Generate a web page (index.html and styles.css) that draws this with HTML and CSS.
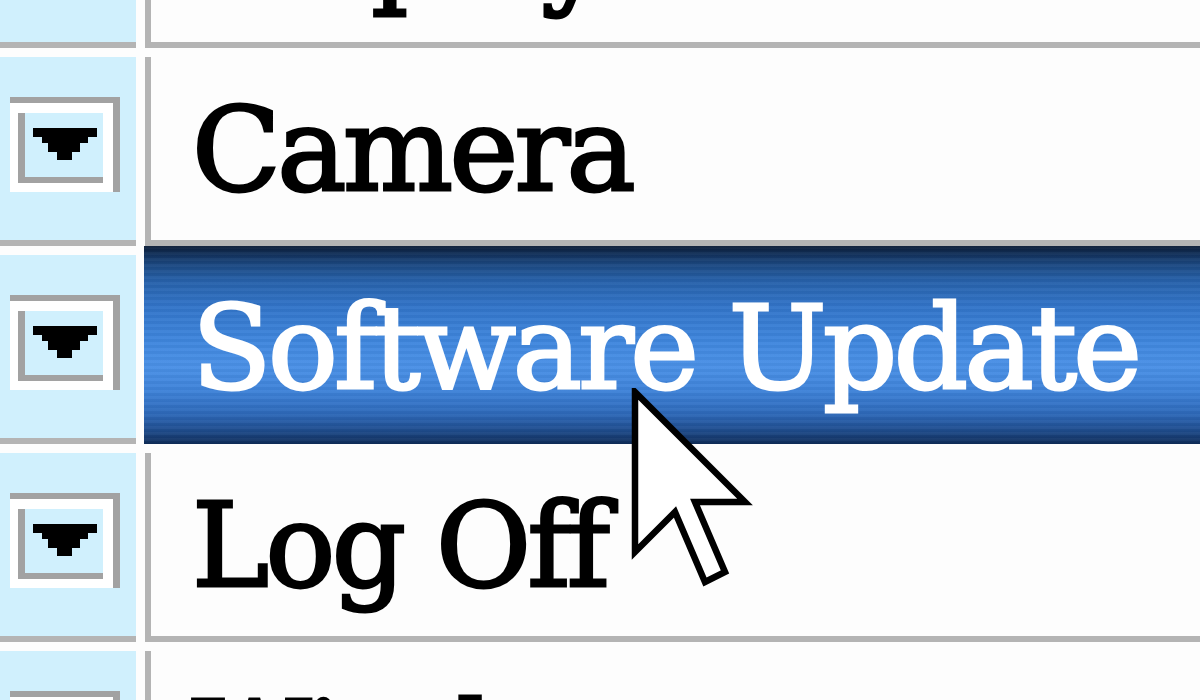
FILE: index.html
```html
<!DOCTYPE html>
<html>
<head>
<meta charset="utf-8">
<link rel="stylesheet" href="styles.css">
</head>
<body>
<div class="screen">
  <ul class="menu">
    <li class="row">
      <div class="toggle"><svg class="drop" viewBox="0 0 110 95" width="110" height="95"><use href="#dropbtn"/></svg></div>
      <div class="item"><span class="label">Display</span></div>
    </li>
    <li class="row">
      <div class="toggle"><svg class="drop" viewBox="0 0 110 95" width="110" height="95"><use href="#dropbtn"/></svg></div>
      <div class="item"><span class="label">Camera</span></div>
    </li>
    <li class="row selected">
      <div class="toggle"><svg class="drop" viewBox="0 0 110 95" width="110" height="95"><use href="#dropbtn"/></svg></div>
      <div class="item"><span class="label">Software Update</span></div>
    </li>
    <li class="row">
      <div class="toggle"><svg class="drop" viewBox="0 0 110 95" width="110" height="95"><use href="#dropbtn"/></svg></div>
      <div class="item"><span class="label">Log Off</span></div>
    </li>
    <li class="row">
      <div class="toggle"><svg class="drop" viewBox="0 0 110 95" width="110" height="95"><use href="#dropbtn"/></svg></div>
      <div class="item"><span class="label">Wireless</span></div>
    </li>
  </ul>

  <svg class="cursor" viewBox="-0.4 -0.4 12.3 20.3" width="123" height="203">
    <path d="M0 0 L0 16 L4 12 L7 19 L9 18 L6 11 L11 11 Z" fill="#fff" stroke="#000" stroke-width="0.65" stroke-linejoin="miter"/>
  </svg>

  <svg width="0" height="0" class="defs">
    <defs>
      <g id="dropbtn">
        <rect x="0" y="0" width="110" height="6" fill="#a2a2a2"/>
        <rect x="103" y="0" width="7" height="95" fill="#a2a2a2"/>
        <rect x="0" y="6" width="103" height="89" fill="#ffffff"/>
        <rect x="8" y="16" width="7" height="70" fill="#a2a2a2"/>
        <rect x="8" y="80" width="85" height="6" fill="#a2a2a2"/>
        <rect x="15" y="16" width="78" height="64" fill="#d0f0fd"/>
        <rect x="23" y="31" width="64" height="9" fill="#000"/>
        <rect x="32" y="40" width="46" height="6" fill="#000"/>
        <rect x="38" y="46" width="32" height="9" fill="#000"/>
        <rect x="47" y="55" width="15" height="8" fill="#000"/>
      </g>
    </defs>
  </svg>
</div>
</body>
</html>
```

FILE: styles.css
```css
html, body {
  margin: 0;
  padding: 0;
  background: #fdfdfd;
}

.screen {
  position: relative;
  width: 1200px;
  height: 700px;
  overflow: hidden;
  background: #fdfdfd;
}

.menu {
  list-style: none;
  margin: -150px 0 0 0;
  padding: 0;
}

.row {
  display: flex;
  padding-top: 9px;
  height: 198px;
  box-sizing: border-box;
}

.toggle {
  width: 136px;
  height: 189px;
  box-sizing: border-box;
  flex: none;
  background: #d0f0fd;
  border-bottom: 6px solid #b4b4b4;
  padding: 40px 0 0 10px;
}

.drop {
  display: block;
}

.item {
  flex: 1;
  margin-left: 9px;
  height: 189px;
  box-sizing: border-box;
  border-left: 6px solid #b4b4b4;
  border-bottom: 6px solid #b4b4b4;
  padding: 35px 0 0 41px;
  font-family: "DejaVu Serif", "Liberation Serif", serif;
  font-size: 116px;
  line-height: 1;
  letter-spacing: -3.5px;
  color: #000;
  -webkit-text-stroke: 3px #000;
  white-space: nowrap;
}

.row.selected .item {
  margin-top: -9px;
  margin-left: 8px;
  height: 198px;
  border: none;
  padding: 44px 0 0 48px;
  color: #fff;
  -webkit-text-stroke: 3px #fff;
  background:
    repeating-linear-gradient(to bottom, rgba(255,255,255,0.03) 0 3px, rgba(0,0,0,0.03) 3px 6px),
    linear-gradient(to bottom,
      #0b1c36 0px,
      #12305a 8px,
      #1b477f 18px,
      #2660a8 34px,
      #3274c8 60px,
      #3f86dd 95px,
      #4a90e6 120px,
      #3e82d8 145px,
      #2d68b8 168px,
      #1f4d8e 184px,
      #0f2c58 198px);
}

.cursor {
  position: absolute;
  left: 631px;
  top: 388px;
}

.defs {
  position: absolute;
}
```
